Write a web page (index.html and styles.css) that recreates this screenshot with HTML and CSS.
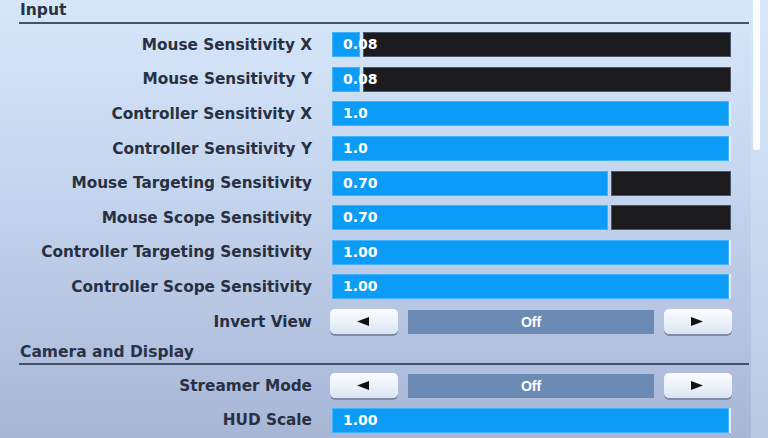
FILE: index.html
```html
<!DOCTYPE html>
<html>
<head>
<title>Settings</title>
<meta charset="utf-8">
<link rel="stylesheet" href="styles.css">
</head>
<body>

<div class="screen">
	<div class="panel">
		<div class="section">Input</div>

		<div class="row">
			<span class="label">Mouse Sensitivity X</span>
			<div class="bar"><div class="fill" style="width:28px"></div><div class="rest"></div><span class="value">0.08</span></div>
		</div>
		<div class="row">
			<span class="label">Mouse Sensitivity Y</span>
			<div class="bar"><div class="fill" style="width:28px"></div><div class="rest"></div><span class="value">0.08</span></div>
		</div>
		<div class="row">
			<span class="label">Controller Sensitivity X</span>
			<div class="bar"><div class="fill full"></div><span class="value">1.0</span></div>
		</div>
		<div class="row">
			<span class="label">Controller Sensitivity Y</span>
			<div class="bar"><div class="fill full"></div><span class="value">1.0</span></div>
		</div>
		<div class="row">
			<span class="label">Mouse Targeting Sensitivity</span>
			<div class="bar"><div class="fill" style="width:276px"></div><div class="rest"></div><span class="value">0.70</span></div>
		</div>
		<div class="row">
			<span class="label">Mouse Scope Sensitivity</span>
			<div class="bar"><div class="fill" style="width:276px"></div><div class="rest"></div><span class="value">0.70</span></div>
		</div>
		<div class="row">
			<span class="label">Controller Targeting Sensitivity</span>
			<div class="bar"><div class="fill full"></div><span class="value">1.00</span></div>
		</div>
		<div class="row">
			<span class="label">Controller Scope Sensitivity</span>
			<div class="bar"><div class="fill full"></div><span class="value">1.00</span></div>
		</div>
		<div class="row">
			<span class="label">Invert View</span>
			<div class="toggle">
				<button class="arrow"><svg width="12" height="9" viewBox="0 0 12 9"><path d="M0 4.5 L12 0 L12 9 Z"/></svg></button>
				<div class="state">Off</div>
				<button class="arrow"><svg width="12" height="9" viewBox="0 0 12 9"><path d="M12 4.5 L0 0 L0 9 Z"/></svg></button>
			</div>
		</div>

		<div class="section">Camera and Display</div>

		<div class="row">
			<span class="label">Streamer Mode</span>
			<div class="toggle">
				<button class="arrow"><svg width="12" height="9" viewBox="0 0 12 9"><path d="M0 4.5 L12 0 L12 9 Z"/></svg></button>
				<div class="state">Off</div>
				<button class="arrow"><svg width="12" height="9" viewBox="0 0 12 9"><path d="M12 4.5 L0 0 L0 9 Z"/></svg></button>
			</div>
		</div>
		<div class="row">
			<span class="label">HUD Scale</span>
			<div class="bar"><div class="fill full"></div><span class="value">1.00</span></div>
		</div>
	</div>

	<div class="scrollbar"><div class="thumb"></div></div>
</div>

</body>
</html>
```

FILE: styles.css
```css
html, body {
	margin: 0;
	padding: 0;
}

body {
	width: 768px;
	height: 438px;
	overflow: hidden;
	font-family: "DejaVu Sans", "Open Sans", sans-serif;
	background: linear-gradient(180deg, #d7e7f9 0%, #c3d4ee 45%, #a8b6d6 100%);
}

.screen {
	display: flex;
	height: 438px;
}

.panel {
	width: 732px;
	padding-left: 19px;
	margin-top: -2px;
}

/*******section titles**********/
.section {
	height: 24px;
	line-height: 24px;
	font-size: 15.5px;
	font-weight: 700;
	color: #2a3345;
	padding-left: 1px;
	border-bottom: 2px solid #46546b;
	margin-bottom: 3.5px;
}

.row + .section {
	line-height: 26px;
}

.row {
	display: flex;
	align-items: center;
	height: 34.6px;
}

.label {
	width: 293px;
	text-align: right;
	font-size: 15.3px;
	font-weight: 700;
	color: #283042;
	margin-right: 20px;
	white-space: nowrap;
}

/*******slider bars**********/
.bar {
	position: relative;
	display: flex;
	width: 399px;
	height: 25px;
}

.fill {
	background-color: #0a9cf7;
	box-shadow: inset 0 0 0 1px rgba(120, 200, 255, 0.5);
}

.fill.full {
	width: 397px;
	border-right: 2px solid #e4effb;
}

.rest {
	flex: 1;
	margin-left: 3px;
	background-color: #1b1b1d;
	border: 1px solid #4c5670;
}

.value {
	position: absolute;
	left: 11px;
	top: 0;
	line-height: 25px;
	font-size: 14px;
	font-weight: 700;
	color: #fff;
}

/*******on / off toggles**********/
.toggle {
	display: flex;
	align-items: center;
	gap: 10px;
	width: 402px;
	margin-left: -2px;
}

.arrow {
	display: flex;
	align-items: center;
	justify-content: center;
	width: 68px;
	height: 25px;
	padding: 0 2px 0 0;
	border: none;
	border-radius: 5px;
	background: linear-gradient(180deg, #fbfdff 0%, #e9f0f9 60%, #d9e3f1 100%);
	box-shadow: 0 2px 0 #7f8ba6;
}

.arrow svg {
	fill: #111;
}

.state {
	flex: 1;
	height: 24px;
	line-height: 24px;
	text-align: center;
	background-color: #6c8bb4;
	font-family: "Liberation Sans", sans-serif;
	font-size: 14px;
	font-weight: 700;
	color: #fff;
}

/*******scrollbar**********/
.scrollbar {
	width: 17px;
	margin-left: 2px;
	background-color: rgba(220, 234, 250, 0.35);
}

.thumb {
	width: 7px;
	height: 150px;
	margin-left: 2px;
	background-color: #fbfdff;
	border-radius: 0 0 2px 2px;
}
```
